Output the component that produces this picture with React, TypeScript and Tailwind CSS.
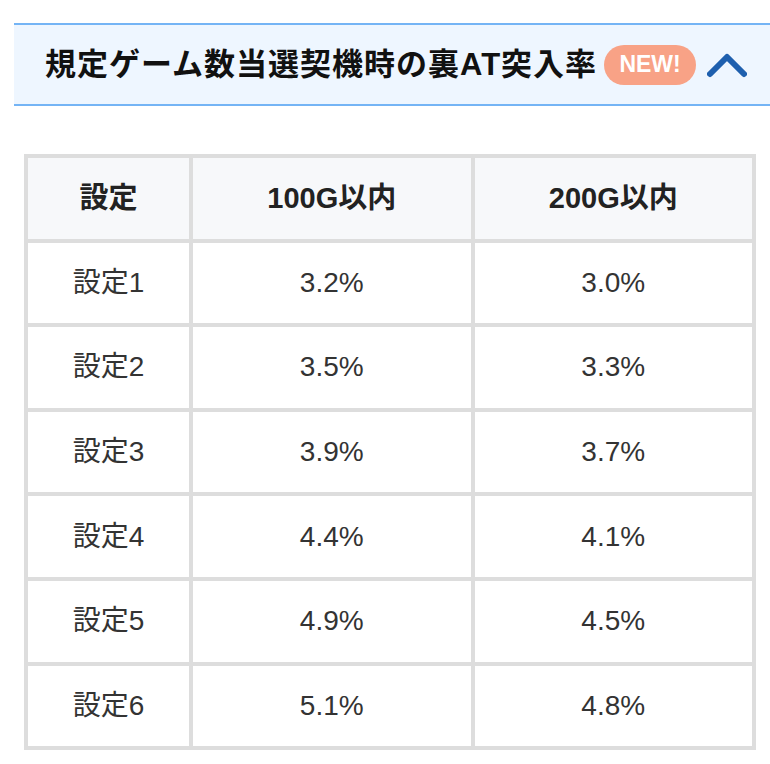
import React from 'react';

const rows = [
  { label: '設定1', a: '3.2%', b: '3.0%' },
  { label: '設定2', a: '3.5%', b: '3.3%' },
  { label: '設定3', a: '3.9%', b: '3.7%' },
  { label: '設定4', a: '4.4%', b: '4.1%' },
  { label: '設定5', a: '4.9%', b: '4.5%' },
  { label: '設定6', a: '5.1%', b: '4.8%' },
];

const font = { fontFamily: '"Liberation Sans", "Noto Sans CJK JP", sans-serif' };

function App() {
  return (
    <div className="min-h-screen bg-white pt-[23px]" style={font}>
      {/* Section header */}
      <div className="ml-[14px] h-[83px] border-y-2 border-[#74b4f5] bg-[#eef6ff] flex items-center pl-[31px]">
        <h2 className="text-[31px] font-bold text-[#111] tracking-[1px] leading-none">
          規定ゲーム数当選契機時の裏AT突入率
        </h2>
        <span className="ml-[7px] w-[92px] h-[40px] rounded-full bg-[#f8a286] text-white font-bold text-[23px] flex items-center justify-center">
          NEW!
        </span>
        <svg className="ml-[11px]" width="40" height="26" viewBox="0 0 40 26">
          <path d="M3 22 L20 5 L37 22" fill="none" stroke="#1e5fae" strokeWidth="6" strokeLinecap="round" strokeLinejoin="round" />
        </svg>
      </div>

      {/* Table */}
      <div className="mt-[48px] ml-[24px] w-[732px] bg-[#dddddd] p-[4px] grid grid-cols-[161px_1fr_1fr] auto-rows-[80.6px] gap-[4px]">
        <div className="bg-[#f7f8fa] flex items-center justify-center text-[29px] font-bold text-[#222]">設定</div>
        <div className="bg-[#f7f8fa] flex items-center justify-center text-[29px] font-bold text-[#222]">100G以内</div>
        <div className="bg-[#f7f8fa] flex items-center justify-center text-[29px] font-bold text-[#222]">200G以内</div>
        {rows.map(r => (
          <React.Fragment key={r.label}>
            <div className="bg-white flex items-center justify-center text-[28px] text-[#333]">{r.label}</div>
            <div className="bg-white flex items-center justify-center text-[28px] text-[#333]">{r.a}</div>
            <div className="bg-white flex items-center justify-center text-[28px] text-[#333]">{r.b}</div>
          </React.Fragment>
        ))}
      </div>
    </div>
  );
}

export default App;
